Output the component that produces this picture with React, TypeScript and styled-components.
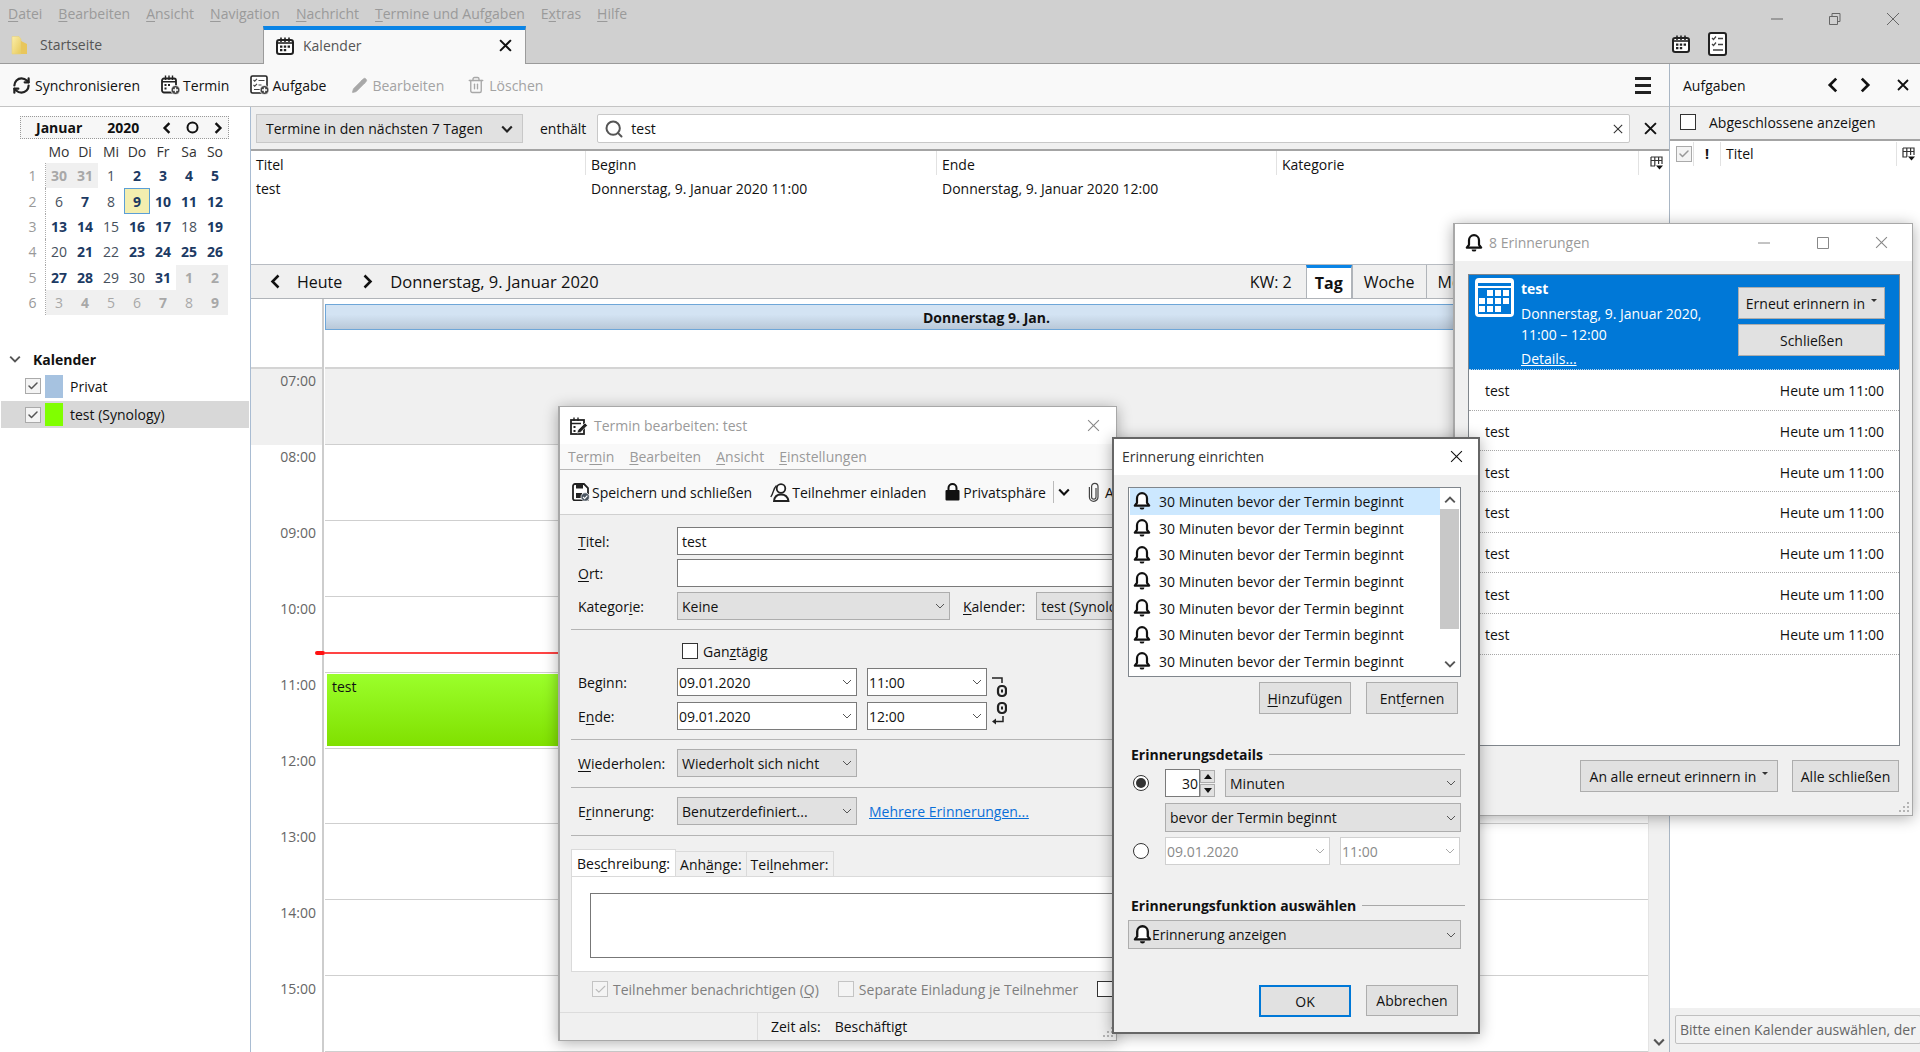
import React from "react";
import styled, { createGlobalStyle } from "styled-components";
import { RefreshCw, Pencil, Trash2, Search, Check } from "lucide-react";

const Global = createGlobalStyle`
  html, body { margin: 0; padding: 0; height: 100%; overflow: hidden; background: #fff; }
  body { font-family: "Open Sans", "Noto Sans", "Liberation Sans", sans-serif; font-size: 14px; color: #111; }
  #root { height: 100%; }
  * { box-sizing: border-box; }
`;

const Page = styled.div`
  position: relative; width: 1920px; height: 1052px; overflow: hidden;
  display: flex; flex-direction: column; background: #fff;
`;
const MenuBar = styled.div`
  height: 26px; background: #d0d0d0; display: flex; align-items: center; gap: 16px; padding-left: 8px; flex: none;
`;
const MenuItem = styled.span`
  color: #9a9a9a; white-space: nowrap;
`;
const Accel = styled.span`text-decoration: underline; text-underline-offset: 2px;`;
const WinControls = styled.div`
  margin-left: auto; display: flex; align-items: center; gap: 44px; padding-right: 20px; height: 26px; position: relative; top: 6px;
`;
const TabBar = styled.div`
  height: 38px; background: #d0d0d0; border-bottom: 1px solid #9b9b9b; display: flex; flex: none; align-items: stretch;
`;
const HomeTab = styled.div`
  width: 263px; display: flex; align-items: center; gap: 11px; padding-left: 11px; color: #555;
`;
const ActiveTab = styled.div`
  width: 263px; height: 38px; background: #f9f9f9; border-top: 4px solid #0a84e6; border-left: 1px solid #9b9b9b; border-right: 1px solid #9b9b9b;
  display: flex; align-items: center; padding: 0 13px 3px 12px; gap: 9px; color: #555; position: relative;
`;
const TabClose = styled.span`margin-left: auto; display: flex;`;
const ModeButtons = styled.div`
  margin-left: auto; display: flex; gap: 18px; align-items: center; padding-right: 193px; padding-bottom: 2px;
`;
const Body = styled.div`flex: 1; display: flex; min-height: 0;`;
const LeftArea = styled.div`width: 1669px; display: flex; flex-direction: column; flex: none;`;
const Toolbar = styled.div`
  height: 43px; flex: none; background: #f9f9f9; border-bottom: 1px solid #c4c4c4;
  display: flex; align-items: center; gap: 21px; padding-left: 12px; padding-right: 18px; 
`;
const ToolItem = styled.span`
  display: flex; align-items: center; gap: ${p => p.$gap ?? 4}px; margin-left: ${p => p.$ml || 0}px; white-space: nowrap; color: ${p => (p.$off ? "#a3a3a3" : "#111")};
`;
const ToolMenu = styled.span`margin-left: auto; display: flex; flex-direction: column; gap: 4px;`;
const MenuBarLine = styled.span`width: 16px; height: 3px; background: #222;`;
const Content = styled.div`flex: 1; display: flex; min-height: 0;`;
const Sidebar = styled.div`
  width: 251px; flex: none; border-right: 1px solid #a9bcd2; padding-top: 9px; background: #fff;
`;
const MiniCal = styled.div`margin-left: 20px; width: 209px;`;
const MiniHead = styled.div`
  height: 23px; border: 1px dotted #999; display: flex; align-items: center; font-weight: 700; padding-left: 15px; position: relative; background: #f7f7f7;
`;
const MiniYear = styled.span`margin-left: 25px;`;
const MiniArrows = styled.span`margin-left: 22px; display: flex; align-items: center; gap: 13px;`;
const MiniGrid = styled.div`
  display: grid; grid-template-columns: 26px repeat(7, 26px); grid-template-rows: 24px; grid-auto-rows: 25.4px;
`;
const Wd = styled.div`
  display: flex; align-items: center; justify-content: center; color: #333;
`;
const Wk = styled.div`
  display: flex; align-items: center; justify-content: center; color: #999; border-right: 1px dotted #aaa;
`;
const DayCell = styled.div`
  display: flex; align-items: center; justify-content: center;
  font-weight: ${p => (p.$bold ? 700 : 400)};
  color: ${p => (p.$other ? "#a8a8a8" : p.$bold ? "#1c3a63" : "#46505c")};
  background: ${p => (p.$today ? "#f3eeaf" : p.$other ? "#f0f0f0" : "transparent")};
  border: ${p => (p.$today ? "1px solid #5b9fd6" : "none")};
`;
const CalTitle = styled.div`
  margin-top: 34px; display: flex; align-items: center; height: 20px; padding-left: 9px; gap: 12px; font-weight: 700;
`;
const CalRow = styled.div`
  display: flex; align-items: center; height: ${p => (p.$sel ? 27 : 24)}px; margin: ${p => (p.$sel ? "3px 1px 0 1px" : "5px 1px 0 1px")};
  padding-left: 24px; background: ${p => (p.$sel ? "#d8d8d8" : "transparent")};
`;
const CheckBox = styled.span`
  width: 16px; height: 16px; border: 1px solid #aaa; background: #f4f4f4; display: inline-flex; align-items: center; justify-content: center; flex: none; color: #555;
`;
const Swatch = styled.span`
  width: 18px; height: 23px; background: ${p => p.$c}; margin-left: 4px; margin-right: 7px; flex: none;
`;
const Center = styled.div`flex: 1; display: flex; flex-direction: column; min-width: 0;`;
const FilterBar = styled.div`
  height: 44px; flex: none; background: #f0f0f0; border-bottom: 2px solid #a4a4a4; display: flex; align-items: center; padding: 1px 12px 0 5px;
`;
const FilterSelect = styled.div`
  width: 267px; height: 29px; background: #e1e1e1; border: 1px solid #c8c8c8; display: flex; align-items: center; padding: 0 9px; justify-content: space-between;
`;
const Contains = styled.span`margin: 0 11px 0 17px;`;
const SearchBox = styled.div`
  flex: 1; height: 29px; background: #fff; border: 1px solid #c8c8c8; border-radius: 2px; display: flex; align-items: center; padding: 0 6px; gap: 7px;
`;
const SearchClear = styled.span`margin-left: auto; display: flex;`;
const FilterClose = styled.span`margin-left: 14px; display: flex;`;
const TableWrap = styled.div`height: 114px; flex: none; background: #fff; border-bottom: 1px solid #b8bcc2;`;
const TableRow = styled.div`
  display: grid; grid-template-columns: 335px 351px 340px 362px 1fr; height: ${p => (p.$head ? 24 : 26)}px; align-items: center;
`;
const TableCell = styled.div`
  padding: ${p => (p.$head ? "2px" : "0")} 0 0 ${p => (p.$pick ? 11 : 5)}px; height: 24px; display: flex; align-items: center;
  border-right: ${p => (p.$head ? "1px solid #e2e2e2" : "none")}; white-space: nowrap;
`;
const NavBar = styled.div`
  height: 34px; flex: none; background: #f0f0f0; border-bottom: 1px solid #b0b4b9; display: flex; align-items: center; padding-left: 17px; position: relative;
`;
const NavLabel = styled.span`margin: 0 18px 0 14px; font-size: 16px;`;
const NavDate = styled.span`margin-left: 15px; font-size: 16.5px; white-space: nowrap;`;
const NavWeek = styled.span`margin-left: auto; margin-right: 14px; font-size: 16px;`;
const ViewTab = styled.span`
  height: 33px; display: flex; align-items: center; padding: 0 ${p => (p.$active ? 8 : 11)}px; font-size: 16px; white-space: nowrap;
  font-weight: ${p => (p.$active ? 700 : 400)}; background: ${p => (p.$active ? "#fff" : "transparent")};
  border-top: ${p => (p.$active ? "3px solid #0a84e6" : "none")};
  border-left: 1px solid #b0b4b9; border-right: ${p => (p.$active ? "1px solid #b0b4b9" : "none")};
  align-self: flex-end;
`;
const ViewTabs = styled.div`display: flex; align-self: stretch; padding-right: 172px;`;
const DayView = styled.div`flex: 1; display: flex; min-height: 0; overflow: hidden;`;
const Gutter = styled.div`width: 73px; flex: none; border-right: 2px solid #cdcdcd; margin-right: 1px;`;
const GutterTop = styled.div`height: 68px;`;
const HourLabel = styled.div`
  height: ${p => (p.$first ? 78 : 76)}px; background: ${p => (p.$first ? "#f0f0f0" : "#fff")}; text-align: right; padding: 1px 6px 0 0; color: #666;
  line-height: 22px; border-top: ${p => (p.$first ? "2px solid #d4d4d4" : "none")};
`;
const DayCol = styled.div`flex: 1; min-width: 0; display: flex; flex-direction: column;`;
const DayHead = styled.div`
  margin-top: 5px; height: 26px; border: 1px solid #6ea6d8; background: linear-gradient(#d3e3f3 40%, #b9c8d8); font-weight: 700; display: flex; align-items: center; justify-content: center;
  flex: none;
`;
const AllDay = styled.div`height: 37px; flex: none; background: #fff;`;
const Slots = styled.div`position: relative; border-top: 2px solid #d4d4d4;`;
const Slot = styled.div`
  height: ${p => (p.$first ? 76 : 75.9)}px; background: ${p => (p.$first ? "#f0f0f0" : "#fff")}; border-bottom: 1px solid #cfcfcf;
`;
const NowLine = styled.div`
  position: absolute; left: 0; right: 0; top: 283px; height: 2px; background: #f44;
  &::before { content: ""; position: absolute; left: -10px; top: -1px; width: 10px; height: 4px; border-radius: 2px; background: #f11; }
`;
const EventBox = styled.div`
  position: absolute; left: 2px; right: 1px; top: 305px; height: 72px; background: linear-gradient(#9bff2b, #80e000); padding: 3px 5px; color: #111;
`;
const VScroll = styled.div`
  width: 21px; flex: none; background: #f0f0f0; border-left: 1px solid #e4e4e4; display: flex; align-items: flex-end; justify-content: center; padding-bottom: 4px;
`;
const RightPanel = styled.div`
  flex: 1; display: flex; flex-direction: column; border-left: 1px solid #a9b6c4; background: #fff;
`;
const RightHead = styled.div`
  height: 43px; flex: none; background: #f9f9f9; border-bottom: 1px solid #c4c4c4; display: flex; align-items: center; padding-left: 13px;
`;
const RightNav = styled.span`margin-left: auto; display: flex; align-items: center; gap: 16px; padding-right: 11px;`;
const RightClose = styled.span`margin: 0 5px 0 8px; display: flex;`;
const RightFilter = styled.div`
  height: 34px; flex: none; background: #f0f0f0; border-bottom: 2px solid #a4a4a4; display: flex; align-items: center; padding-left: 10px; gap: 13px; padding-bottom: 2px;
`;
const PlainBox = styled.span`
  width: 16px; height: 16px; flex: none; display: inline-flex; align-items: center; justify-content: center;
  background: ${p => (p.$off ? "#f4f4f4" : "#fff")}; border: 1px solid ${p => (p.$off ? "#c4c4c4" : "#333")}; color: #bbb;
`;
const TaskHead = styled.div`display: flex; height: 25px; align-items: center; padding: 0 4px;`;
const TaskCell = styled.div`
  height: 24px; display: flex; align-items: center; justify-content: ${p => (p.$grow ? "flex-start" : "center")}; flex: ${p => (p.$grow ? 1 : "none")};
  width: ${p => (p.$w ? p.$w + "px" : "auto")}; border-right: ${p => (p.$noline ? "none" : "1px solid #e2e2e2")}; padding-left: ${p => (p.$grow ? 5 : 0)}px;
`;
const Spacer = styled.div`flex: 1;`;
const QuickAdd = styled.div`height: 44px; flex: none; background: #f0f0f0; padding: 7px 4px 8px 5px;`;
const QuickInput = styled.div`
  height: 29px; border: 1px solid #c0c0c0; border-radius: 2px; background: #f2f2f2; color: #666; padding: 0 4px; display: flex; align-items: center; overflow: hidden; white-space: nowrap;
`;

/* windows */
const Win = styled.div`
  position: absolute; left: ${p => p.$x}px; top: ${p => p.$y}px; width: ${p => p.$w}px; height: ${p => p.$h}px; background: #f0f0f0;
  border: ${p => (p.$active ? "2px solid #666" : "1px solid #a8a8a8")}; border-left-width: 2px;
  box-shadow: 0 2px 14px rgba(0,0,0,.32); display: flex; flex-direction: column; overflow: hidden; z-index: ${p => p.$z};
`;
const WinTitle = styled.div`
  height: ${p => p.$h || 37}px; background: #fff; flex: none; display: flex; align-items: center; gap: 6px;
  padding: 0 ${p => p.$pr || 16}px ${p => (p.$active ? 2 : 0)}px ${p => (p.$active ? 8 : 10)}px;
  color: ${p => (p.$active ? "#333" : "#9a9a9a")};
`;
const TitleBtns = styled.span`margin-left: auto; display: flex; align-items: center; gap: 45px;`;
const DlgMenu = styled.div`
  height: 26px; flex: none; background: #f9f9f9; border-bottom: 1px solid #b8b8b8; display: flex; align-items: center; gap: 15px; padding-left: 8px; color: #9a9a9a;
`;
const DlgTools = styled.div`
  height: 45px; flex: none; background: #f9f9f9; border-bottom: 1px solid #d0d0d0; display: flex; align-items: center; padding-left: 12px; white-space: nowrap;
`;
const DlgTool = styled.span`display: flex; flex: none; align-items: center; gap: 2px; margin-right: ${p => p.$mr ?? 18}px;`;
const DlgSep = styled.span`width: 1px; height: 22px; flex: none; background: #bbb; margin: 0 4px 0 -11px;`;
const Form = styled.div`flex: 1; display: flex; flex-direction: column; padding: 0 0 0 11px; min-height: 0;`;
const FRow = styled.div`
  display: flex; align-items: center; height: ${p => p.$h}px; margin-top: ${p => p.$mt}px; flex: none;
`;
const FLabel = styled.span`width: 106px; padding-left: 7px; flex: none; white-space: nowrap;`;
const Hr = styled.div`height: 1px; background: #b4b4b4; margin-top: ${p => p.$mt}px; flex: none;`;
const TextBox = styled.div`
  flex: 1; height: 100%; background: #fff; border: 1px solid #7a7a7a; display: flex; align-items: center; padding: 0 4px; white-space: nowrap;
`;
const Combo = styled.div`
  flex: ${p => (p.$w ? "none" : 1)}; width: ${p => (p.$w ? p.$w + "px" : "auto")}; height: 100%; padding: 0 4px 0 ${p => (p.$kind ? 1 : 4)}px; display: flex; align-items: center; justify-content: space-between; white-space: nowrap; overflow: hidden;
  background: ${p => (p.$kind === "edit" ? "#fff" : p.$kind === "off" ? "#fff" : "#e1e1e1")};
  border: 1px solid ${p => (p.$kind === "edit" ? "#7a7a7a" : p.$kind === "off" ? "#d0d0d0" : "#adadad")};
  color: ${p => (p.$kind === "off" ? "#8a8a8a" : "#111")};
  margin-left: ${p => p.$ml || 0}px;
`;
const ChainSlot = styled.span`position: relative; width: 0; height: 100%; flex: none;`;
const ChainIcon = styled.span`position: absolute; left: 4px; top: 9px; display: flex;`;
const Side = styled.span`margin-left: ${p => p.$ml}px; white-space: nowrap; display: flex; align-items: center;`;
const LinkText = styled.span`margin-left: 12px; color: #0a6fd8; text-decoration: underline; white-space: nowrap;`;
const TabsRow = styled.div`display: flex; align-items: flex-end; height: 27px; margin-top: 13px; flex: none;`;
const DTab = styled.span`
  height: ${p => (p.$active ? 27 : 25)}px; padding: 0 ${p => (p.$active ? 5 : 4)}px; display: flex; align-items: center; white-space: nowrap;
  background: ${p => (p.$active ? "#fff" : "#f0f0f0")}; border: 1px solid #dadada; border-bottom: none;
  margin-right: -1px;
`;
const DPanel = styled.div`
  height: 96px; flex: none; background: #fff; border: 1px solid #dadada; padding: 16px 0 14px 18px;
`;
const TextArea = styled.div`height: 65px; border: 1px solid #777; background: #fff;`;
const ChecksRow = styled.div`display: flex; align-items: center; margin-top: 9px; padding-left: 21px; height: 16px; flex: none; color: #7e7e7e;`;
const CheckLabel = styled.span`margin: 0 19px 0 5px; white-space: nowrap;`;
const StatusBar = styled.div`
  margin: auto 0 0 -11px; height: 28px; border-top: 1px solid #dcdcdc; display: flex; align-items: center; flex: none; position: relative;
`;
const StatusField = styled.span`
  margin-left: 197px; padding-left: 13px; border-left: 1px solid #dcdcdc; height: 100%; display: flex; align-items: center; gap: 14px; white-space: nowrap;
`;
const Grip = styled.span`
  position: absolute; right: 2px; bottom: 2px; display: flex;
`;

const RemWinBody = styled.div`flex: 1; display: flex; flex-direction: column; padding: 13px 12px 0 13px; min-height: 0; position: relative;`;
const RemList = styled.div`height: 472px; flex: none; background: #fff; border: 1px solid #80868c; padding: 0;`;
const RemSel = styled.div`
  height: 95px; background: #0078d7; color: #fff; display: flex; padding: 3px 14px 0 6px; border-bottom: 1px dotted #b9d3e8;
`;
const RemText = styled.div`margin-left: 7px; flex: 1; line-height: 21px;`;
const RemName = styled.div`font-weight: 700;`;
const RemLine = styled.div`margin-top: ${p => p.$mt || 0}px; white-space: nowrap;`;
const RemLink = styled.div`text-decoration: underline; margin-top: 3px;`;
const RemBtns = styled.div`display: flex; flex-direction: column; gap: 5px; margin-top: 9px;`;
const PushBtn = styled.div`
  width: ${p => p.$w}px; height: ${p => p.$h || 32}px; background: #e1e1e1; border: ${p => (p.$def ? "2px solid #0078d7" : "1px solid #adadad")};
  display: flex; align-items: center; justify-content: center; gap: 6px; color: #111; white-space: nowrap; flex: none;
`;
const RemRow = styled.div`
  height: 40.7px; display: flex; align-items: center; justify-content: space-between; padding: 2px 15px 0 16px; border-bottom: 1px dotted #a8a8a8;
`;
const RemFoot = styled.div`display: flex; justify-content: flex-end; gap: 14px; margin-top: 14px; padding-right: 1px;`;
const Caret = styled.span`
  display: inline-block; width: 0; height: 0; border-left: 3px solid transparent; border-right: 3px solid transparent; border-top: 3px solid #333; margin-bottom: 5px;
`;

const DlgBody = styled.div`flex: 1; display: flex; flex-direction: column; padding: 12px 0 0 14px; min-height: 0;`;
const DlgList = styled.div`
  width: 333px; height: 190px; flex: none; background: #fff; border: 1px solid #80868c; display: flex; overflow: hidden;
`;
const DlgRows = styled.div`flex: 1; padding: 0 0 0 1px;`;
const DlgRow = styled.div`
  height: 26.7px; display: flex; align-items: center; gap: 8px; padding-left: 3px; white-space: nowrap;
  background: ${p => (p.$sel ? "#cce8ff" : "transparent")};
`;
const DlgScroll = styled.div`width: 20px; flex: none; display: flex; flex-direction: column; align-items: center; justify-content: space-between; padding: 6px 0 6px; position: relative;`;
const DlgThumb = styled.div`position: absolute; left: 0; right: 1px; top: 21px; height: 120px; background: #c8c8c8;`;
const DlgBtnRow = styled.div`display: flex; gap: 15px; margin: ${p => p.$mt}px 0 0 ${p => p.$ml}px; flex: none;`;
const Group = styled.div`display: flex; align-items: center; gap: 6px; font-weight: 700; height: 20px; padding-bottom: 1px; margin-top: ${p => p.$mt}px; margin-left: 3px; margin-right: 13px; flex: none; white-space: nowrap;`;
const GroupLine = styled.span`flex: 1; height: 1px; background: #a8a8a8;`;
const DRow = styled.div`display: flex; align-items: center; height: ${p => p.$h}px; margin-top: ${p => p.$mt}px; flex: none; width: 333px;`;
const Radio = styled.span`
  width: 16px; height: 16px; border-radius: 50%; border: 1px solid #333; background: #fff; display: inline-flex; align-items: center; justify-content: center; flex: none; margin: 0 16px 0 5px;
  &::after { content: ""; width: ${p => (p.$on ? 10 : 0)}px; height: ${p => (p.$on ? 10 : 0)}px; background: #333; border-radius: 50%; }
`;
const NumBox = styled.div`
  width: 35px; height: 100%; border: 1px solid #7a7a7a; background: #fff; display: flex; align-items: center; justify-content: flex-end; padding-right: 1px; flex: none;
`;
const Spin = styled.div`
  width: 15px; height: 27px; margin: 0 10px 0 0; display: flex; flex-direction: column; gap: 1px; flex: none;
`;
const SpinBtn = styled.span`flex: 1; background: #e1e1e1; border: 1px solid #adadad; display: flex; align-items: center; justify-content: center;`;
const Arrow = styled.span`
  width: 0; height: 0; border-left: 4px solid transparent; border-right: 4px solid transparent;
  ${p => (p.$up ? "border-bottom: 5px solid #111;" : "border-top: 5px solid #111;")}
`;

/* icons */
const S = ({ w = 18, h = 18, children, vb }: any) => (
  <svg width={w} height={h} viewBox={vb || `0 0 ${w} ${h}`} fill="none">{children}</svg>
);
const Chev = ({ dir = "down", size = 10, color = "#555", sw = 1 }: any) => {
  const d = dir === "down" ? "M1 3l4 4 4-4" : dir === "up" ? "M1 7l4-4 4 4" : dir === "left" ? "M7 1L3 5l4 4" : "M3 1l4 4-4 4";
  return <S w={size} h={size} vb="0 0 10 10"><path d={d} stroke={color} strokeWidth={sw} /></S>;
};
const XIcon = ({ size = 12, color = "#111", sw = 1.6 }: any) => (
  <S w={size} h={size} vb="0 0 12 12"><path d="M1 1l10 10M11 1L1 11" stroke={color} strokeWidth={sw} /></S>
);
const CalIcon = ({ size = 18 }: any) => (
  <S w={size} h={size} vb="0 0 18 18">
    <rect x="1" y="3" width="16" height="14" rx="2.2" stroke="#222" strokeWidth="2" fill="#fff" />
    <path d="M5 0.5V5M9 0.5V5M13 0.5V5" stroke="#222" strokeWidth="1.6" />
    <path d="M1 6h16" stroke="#222" strokeWidth="1.6" />
    <path d="M4 8.5h2.4v2.2H4zM7.8 8.5h2.4v2.2H7.8zM11.6 8.5H14v2.2h-2.4zM4 12h2.4v2.2H4zM7.8 12h2.4v2.2H7.8z" fill="#222" />
  </S>
);
const TaskListIcon = () => (
  <S w={19} h={24} vb="0 0 19 24">
    <rect x="1" y="1" width="17" height="22" rx="2" stroke="#222" strokeWidth="2" fill="#fff" />
    <path d="M4 6l1.5 1.5L8 4.5M4 12l1.5 1.5L8 10.5" stroke="#444" strokeWidth="1.2" />
    <path d="M10 6.5h5M10 12.5h5M5 18h10" stroke="#444" strokeWidth="1.4" />
  </S>
);
const PlusBadge = () => (
  <>
    <circle cx="14.5" cy="15" r="4.5" fill="#444" stroke="#fff" strokeWidth="0.8" />
    <path d="M14.5 12.5v5M12 15h5" stroke="#fff" strokeWidth="1.3" />
  </>
);
const NewEventIcon = () => (
  <S w={20} h={20} vb="0 0 20 20">
    <rect x="1" y="3.5" width="14" height="14" rx="2" stroke="#222" strokeWidth="1.8" fill="#fff" />
    <path d="M4.5 0.5V5M8 0.5V5M11.5 0.5V5M1 6.8h14" stroke="#222" strokeWidth="1.4" />
    <path d="M3.5 9h2v2h-2zM7 9h2v2H7zM3.5 12.5h2v2h-2z" fill="#222" />
    <PlusBadge />
  </S>
);
const NewTaskIcon = () => (
  <S w={20} h={20} vb="0 0 20 20">
    <rect x="1" y="1" width="16" height="17" rx="1.5" stroke="#222" strokeWidth="1.6" fill="#fff" />
    <path d="M3.5 5l1.2 1.2L7 3.8M3.5 10l1.2 1.2L7 8.8" stroke="#444" strokeWidth="1.1" />
    <path d="M8.5 5.5h6M8.5 10h3M4 14.5h6" stroke="#444" strokeWidth="1.2" />
    <PlusBadge />
  </S>
);
const Folder = () => (
  <S w={18} h={20} vb="0 0 18 20">
    <defs><linearGradient id="fg" x1="0" y1="0" x2="1" y2="1"><stop offset="0" stopColor="#fbeeaa" /><stop offset="1" stopColor="#e7c95a" /></linearGradient></defs>
    <path d="M1 1.5h7l2 2.5v15H1z" fill="url(#fg)" stroke="#e6d27e" strokeWidth=".6" />
    <path d="M10 6l6 3v10h-6z" fill="#e8c65c" />
  </S>
);
const Bell = ({ size = 18 }: any) => (
  <S w={size} h={size} vb="0 0 18 18">
    <path d="M9 1.2a5 5 0 0 0-5 5v4.6L1.8 13.6h14.4L14 10.8V6.2a5 5 0 0 0-5-5z" stroke="#111" strokeWidth="2.2" strokeLinejoin="round" fill="#fff" />
    <path d="M6.6 15.4h4.8a2.4 2.2 0 0 1-4.8 0z" fill="#111" />
  </S>
);
const Grid3 = () => (
  <S w={14} h={14} vb="0 0 14 14">
    <path d="M1 1h11v7M1 1v9h4M1 4.5h11M4.8 1v9M8.6 1v7" stroke="#333" strokeWidth="1.2" />
    <path d="M6 9.5h7l-3.5 4z" fill="#111" />
  </S>
);
const WinGrip = () => (
  <S w={12} h={12} vb="0 0 12 12">
    <path d="M9 1h2v2H9zM5 5h2v2H5zM9 5h2v2H9zM1 9h2v2H1zM5 9h2v2H5zM9 9h2v2H9z" fill="#b4b4b4" />
  </S>
);
const Chain = () => (
  <S w={16} h={50} vb="0 0 16 50">
    <path d="M1 1h10v5" stroke="#222" strokeWidth="1.5" />
    <rect x="7" y="9" width="8" height="10" rx="3.5" stroke="#222" strokeWidth="2.2" />
    <path d="M11 12.5v3" stroke="#222" strokeWidth="2" />
    <rect x="7" y="26" width="8" height="10" rx="3.5" stroke="#222" strokeWidth="2.2" />
    <path d="M11 29.5v3" stroke="#222" strokeWidth="2" />
    <path d="M12 39v5.5H3" stroke="#222" strokeWidth="1.5" />
    <path d="M5 41.5L1 44.5L5 47.5z" fill="#222" />
  </S>
);
const EditIcon = () => (
  <S w={18} h={18} vb="0 0 18 18">
    <rect x="1" y="3" width="13" height="14" stroke="#222" strokeWidth="1.8" fill="#fff" />
    <path d="M4 0.5V4M8 0.5V4M1 6.5h10" stroke="#222" strokeWidth="1.4" />
    <path d="M3.5 9h2v2h-2zM3.5 13h2v2h-2z" fill="#222" />
    <path d="M7 16l1-3 7-7 2.4 2.4-7 7z" fill="#222" stroke="#fff" strokeWidth=".6" />
  </S>
);
const SaveIcon = () => (
  <S w={18} h={18} vb="0 0 18 18">
    <path d="M1 3a2 2 0 0 1 2-2h9l4 4v11a1.5 1.5 0 0 1-1.5 1.5H3a2 2 0 0 1-2-2z" stroke="#222" strokeWidth="1.8" fill="#fff" />
    <rect x="4" y="1" width="7" height="4.5" fill="#222" />
    <rect x="4" y="10" width="6" height="5" fill="#222" />
    <circle cx="13.2" cy="14" r="4.2" fill="#4a5560" stroke="#fff" strokeWidth=".7" />
    <path d="M11 14l1.6 1.6 2.8-3" stroke="#fff" strokeWidth="1.1" />
  </S>
);
const PeopleIcon = () => (
  <S w={20} h={20} vb="0 0 20 20">
    <circle cx="11" cy="6.5" r="4.3" stroke="#222" strokeWidth="1.8" fill="#fff" />
    <path d="M4 19c.5-4.5 3-6.5 7-6.5s6.7 2 7.5 6.5z" stroke="#222" strokeWidth="1.8" fill="#fff" />
    <path d="M6.5 3.5C3 7 4 10 .8 15" stroke="#222" strokeWidth="1.3" />
  </S>
);
const LockIcon = () => (
  <S w={17} h={18} vb="0 0 17 18">
    <rect x="1.5" y="7" width="14" height="10.5" rx="1" fill="#111" />
    <path d="M4.5 7.5V5a4 4 0 0 1 8 0v2.5" stroke="#111" strokeWidth="2" />
  </S>
);
const Clip = () => (
  <S w={18} h={20} vb="0 0 18 20">
    <path d="M11 6v9a2.2 2.2 0 0 1-4.4 0V4.5a3.2 3.2 0 0 1 6.4 0V15a4.3 4.3 0 0 1-8.6 0V5" stroke="#444" strokeWidth="1.2" />
  </S>
);
const BigCal = () => (
  <S w={39} h={39} vb="0 0 39 39">
    <rect width="39" height="39" rx="4" fill="#fff" />
    <rect x="3" y="5" width="33" height="3" fill="#0078d7" />
    <rect x="3" y="10" width="33" height="26" fill="#0078d7" />
    <path d="M12 12h6v6h-6zM20 12h6v6h-6zM28 12h6v6h-6zM4 20h6v6H4zM12 20h6v6h-6zM20 20h6v6h-6zM28 20h6v6h-6zM4 28h6v6H4zM12 28h6v6h-6zM20 28h6v6h-6z" fill="#fff" />
  </S>
);

const week: [number, string][][] = [
  [[30, "ob"], [31, "ob"], [1, ""], [2, "b"], [3, "b"], [4, "b"], [5, "b"]],
  [[6, ""], [7, "b"], [8, ""], [9, "tb"], [10, "b"], [11, "b"], [12, "b"]],
  [[13, "b"], [14, "b"], [15, ""], [16, "b"], [17, "b"], [18, ""], [19, "b"]],
  [[20, ""], [21, "b"], [22, ""], [23, "b"], [24, "b"], [25, "b"], [26, "b"]],
  [[27, "b"], [28, "b"], [29, ""], [30, ""], [31, "b"], [1, "ob"], [2, "ob"]],
  [[3, "o"], [4, "ob"], [5, "o"], [6, "o"], [7, "ob"], [8, "o"], [9, "ob"]],
];
const menus: [string, string, string][] = [
  ["", "D", "atei"], ["", "B", "earbeiten"], ["", "A", "nsicht"], ["", "N", "avigation"], ["", "N", "achricht"], ["", "T", "ermine und Aufgaben"], ["E", "x", "tras"], ["", "H", "ilfe"],
];
const hours = ["07:00", "08:00", "09:00", "10:00", "11:00", "12:00", "13:00", "14:00", "15:00"];
const Ul = ({ a = "", k, b = "" }: any) => <>{a}<Accel>{k}</Accel>{b}</>;

export default function App() {
  return (
    <Page>
      <Global />
      <MenuBar>
        {menus.map(([a, k, b]) => <MenuItem key={a + k + b}><Ul a={a} k={k} b={b} /></MenuItem>)}
        <WinControls>
          <S w={14} h={14} vb="0 0 14 14"><path d="M1 7h12" stroke="#666" /></S>
          <S w={14} h={14} vb="0 0 14 14"><path d="M1.5 4.5h8v8h-8zM4 4.5V1.5h8v8h-2.5" stroke="#666" /></S>
          <S w={14} h={14} vb="0 0 14 14"><path d="M1 1l12 12M13 1L1 13" stroke="#666" /></S>
        </WinControls>
      </MenuBar>
      <TabBar>
        <HomeTab><Folder />Startseite</HomeTab>
        <ActiveTab><CalIcon />Kalender<TabClose><XIcon size={13} color="#111" sw={1.8} /></TabClose></ActiveTab>
        <ModeButtons><CalIcon /><TaskListIcon /></ModeButtons>
      </TabBar>
      <Body>
        <LeftArea>
          <Toolbar>
            <ToolItem><RefreshCw size={19} strokeWidth={2.8} color="#222" />Synchronisieren</ToolItem>
            <ToolItem $gap={2}><NewEventIcon />Termin</ToolItem>
            <ToolItem $gap={2}><NewTaskIcon />Aufgabe</ToolItem>
            <ToolItem $off $ml={4}><Pencil size={17} color="#a8a8a8" fill="#a8a8a8" strokeWidth={1} />Bearbeiten</ToolItem>
            <ToolItem $off $ml={2}><Trash2 size={18} color="#a8a8a8" strokeWidth={1.8} />Löschen</ToolItem>
            <ToolMenu><MenuBarLine /><MenuBarLine /><MenuBarLine /></ToolMenu>
          </Toolbar>
          <Content>
            <Sidebar>
              <MiniCal>
                <MiniHead>
                  Januar<MiniYear>2020</MiniYear>
                  <MiniArrows>
                    <Chev dir="left" size={12} color="#111" sw={2} />
                    <S w={13} h={13} vb="0 0 13 13"><circle cx="6.5" cy="6.5" r="5" stroke="#111" strokeWidth="2" /></S>
                    <Chev dir="right" size={12} color="#111" sw={2} />
                  </MiniArrows>
                </MiniHead>
                <MiniGrid>
                  <Wd />
                  {["Mo", "Di", "Mi", "Do", "Fr", "Sa", "So"].map(d => <Wd key={d}>{d}</Wd>)}
                  {week.map((r, i) => (
                    <React.Fragment key={i}>
                      <Wk>{i + 1}</Wk>
                      {r.map(([d, f], j) => (
                        <DayCell key={j} $bold={f.includes("b")} $other={f.includes("o")} $today={f.includes("t")}>{d}</DayCell>
                      ))}
                    </React.Fragment>
                  ))}
                </MiniGrid>
              </MiniCal>
              <CalTitle><Chev size={12} color="#555" sw={1.6} />Kalender</CalTitle>
              <CalRow><CheckBox><Check size={12} strokeWidth={3} /></CheckBox><Swatch $c="#a6c2e0" />Privat</CalRow>
              <CalRow $sel><CheckBox><Check size={12} strokeWidth={3} /></CheckBox><Swatch $c="#80ff00" />test (Synology)</CalRow>
            </Sidebar>
            <Center>
              <FilterBar>
                <FilterSelect>Termine in den nächsten 7 Tagen<Chev color="#222" size={12} sw={1.8} /></FilterSelect>
                <Contains>enthält</Contains>
                <SearchBox>
                  <Search size={20} strokeWidth={2.4} color="#555" />test
                  <SearchClear><XIcon size={10} color="#333" sw={1.3} /></SearchClear>
                </SearchBox>
                <FilterClose><XIcon size={13} color="#111" sw={1.8} /></FilterClose>
              </FilterBar>
              <TableWrap>
                <TableRow $head>
                  <TableCell $head>Titel</TableCell>
                  <TableCell $head>Beginn</TableCell>
                  <TableCell $head>Ende</TableCell>
                  <TableCell $head>Kategorie</TableCell>
                  <TableCell $pick><Grid3 /></TableCell>
                </TableRow>
                <TableRow>
                  <TableCell>test</TableCell>
                  <TableCell>Donnerstag, 9. Januar 2020 11:00</TableCell>
                  <TableCell>Donnerstag, 9. Januar 2020 12:00</TableCell>
                  <TableCell />
                </TableRow>
              </TableWrap>
              <NavBar>
                <Chev dir="left" size={15} color="#111" sw={1.7} />
                <NavLabel>Heute</NavLabel>
                <Chev dir="right" size={15} color="#111" sw={1.7} />
                <NavDate>Donnerstag, 9. Januar 2020</NavDate>
                <NavWeek>KW: 2</NavWeek>
                <ViewTabs>
                  <ViewTab $active>Tag</ViewTab>
                  <ViewTab>Woche</ViewTab>
                  <ViewTab>Monat</ViewTab>
                </ViewTabs>
              </NavBar>
              <DayView>
                <Gutter>
                  <GutterTop />
                  {hours.map((h, i) => <HourLabel key={h} $first={i === 0}>{h}</HourLabel>)}
                </Gutter>
                <DayCol>
                  <DayHead>Donnerstag 9. Jan.</DayHead>
                  <AllDay />
                  <Slots>
                    {hours.map((h, i) => <Slot key={h} $first={i === 0} />)}
                    <NowLine />
                    <EventBox>test</EventBox>
                  </Slots>
                </DayCol>
                <VScroll><Chev size={12} color="#555" sw={1.8} /></VScroll>
              </DayView>
            </Center>
          </Content>
        </LeftArea>
        <RightPanel>
          <RightHead>
            Aufgaben
            <RightNav>
              <Chev dir="left" size={16} color="#111" sw={1.7} />
              <Chev dir="right" size={16} color="#111" sw={1.7} />
              <RightClose><XIcon size={12} color="#111" sw={1.8} /></RightClose>
            </RightNav>
          </RightHead>
          <RightFilter><PlainBox />Abgeschlossene anzeigen</RightFilter>
          <TaskHead>
            <TaskCell $w={20}><CheckBox><Check size={12} strokeWidth={3} color="#999" /></CheckBox></TaskCell>
            <TaskCell $w={27}><b>!</b></TaskCell>
            <TaskCell $grow>Titel</TaskCell>
            <TaskCell $w={24} $noline><Grid3 /></TaskCell>
          </TaskHead>
          <Spacer />
          <QuickAdd><QuickInput>Bitte einen Kalender auswählen, der</QuickInput></QuickAdd>
        </RightPanel>
      </Body>

      {/* Termin bearbeiten */}
      <Win $x={558} $y={406} $w={559} $h={635} $z={2}>
        <WinTitle><EditIcon />Termin bearbeiten: test<TitleBtns><XIcon size={13} color="#888" sw={1} /></TitleBtns></WinTitle>
        <DlgMenu>
          <span><Ul a="Ter" k="m" b="in" /></span><span><Ul k="B" b="earbeiten" /></span><span><Ul k="A" b="nsicht" /></span><span><Ul k="E" b="instellungen" /></span>
        </DlgMenu>
        <DlgTools>
          <DlgTool><SaveIcon />Speichern und schließen</DlgTool>
          <DlgTool><PeopleIcon />Teilnehmer einladen</DlgTool>
          <DlgTool><LockIcon />Privatsphäre</DlgTool>
          <DlgSep />
          <DlgTool $mr={15}><Chev size={12} color="#111" sw={1.8} /></DlgTool>
          <DlgTool $mr={2}><Clip />A</DlgTool>
        </DlgTools>
        <Form>
          <FRow $h={28} $mt={12}><FLabel><Ul k="T" b="itel:" /></FLabel><TextBox>test</TextBox></FRow>
          <FRow $h={28} $mt={4}><FLabel><Ul k="O" b="rt:" /></FLabel><TextBox /></FRow>
          <FRow $h={28} $mt={5}>
            <FLabel>Kategor<Accel>i</Accel>e:</FLabel>
            <Combo $w={273}>Keine<Chev /></Combo>
            <Side $ml={13}><span><Ul k="K" b="alender:" /></span></Side>
            <Combo $ml={11}>test (Synology)<Chev /></Combo>
          </FRow>
          <Hr $mt={9} />
          <FRow $h={16} $mt={13}>
            <FLabel /><Side $ml={5}><PlainBox /></Side><Side $ml={5}><span>Gan<Accel>z</Accel>tägig</span></Side>
          </FRow>
          <FRow $h={28} $mt={9}>
            <FLabel>Be<Accel>g</Accel>inn:</FLabel>
            <Combo $w={180} $kind="edit">09.01.2020<Chev /></Combo>
            <Combo $w={120} $ml={10} $kind="edit">11:00<Chev /></Combo>
            <ChainSlot><ChainIcon><Chain /></ChainIcon></ChainSlot>
          </FRow>
          <FRow $h={28} $mt={6}>
            <FLabel>E<Accel>n</Accel>de:</FLabel>
            <Combo $w={180} $kind="edit">09.01.2020<Chev /></Combo>
            <Combo $w={120} $ml={10} $kind="edit">12:00<Chev /></Combo>
          </FRow>
          <Hr $mt={9} />
          <FRow $h={28} $mt={9}>
            <FLabel><Ul k="W" b="iederholen:" /></FLabel>
            <Combo $w={180}>Wiederholt sich nicht<Chev /></Combo>
          </FRow>
          <Hr $mt={10} />
          <FRow $h={28} $mt={9}>
            <FLabel>E<Accel>r</Accel>innerung:</FLabel>
            <Combo $w={180}>Benutzerdefiniert...<Chev /></Combo>
            <LinkText>Mehrere Erinnerungen...</LinkText>
          </FRow>
          <Hr $mt={10} />
          <TabsRow>
            <DTab $active>Bes<Accel>c</Accel>hreibung:</DTab>
            <DTab>Anh<Accel>ä</Accel>nge:</DTab>
            <DTab>Tei<Accel>l</Accel>nehmer:</DTab>
          </TabsRow>
          <DPanel><TextArea /></DPanel>
          <ChecksRow>
            <PlainBox $off><Check size={13} strokeWidth={2} /></PlainBox><CheckLabel>Teilnehmer benachrichtigen (<Accel>Q</Accel>)</CheckLabel>
            <PlainBox $off /><CheckLabel>Separate Einladung <Accel>j</Accel>e Teilnehmer</CheckLabel>
            <PlainBox />
          </ChecksRow>
          <StatusBar>
            <StatusField>Zeit als:<span>Beschäftigt</span></StatusField>
            <Grip><WinGrip /></Grip>
          </StatusBar>
        </Form>
      </Win>

      {/* 8 Erinnerungen */}
      <Win $x={1453} $y={223} $w={460} $h={593} $z={3}>
        <WinTitle $h={37} $pr={24}>
          <Bell />8 Erinnerungen
          <TitleBtns>
            <S w={14} h={14} vb="0 0 14 14"><path d="M1 7h12" stroke="#888" /></S>
            <S w={14} h={14} vb="0 0 14 14"><path d="M1.5 1.5h11v11h-11z" stroke="#888" /></S>
            <XIcon size={13} color="#888" sw={1} />
          </TitleBtns>
        </WinTitle>
        <RemWinBody>
          <RemList>
            <RemSel>
              <BigCal />
              <RemText>
                <RemName>test</RemName>
                <RemLine $mt={4}>Donnerstag, 9. Januar 2020,</RemLine>
                <RemLine>11:00 – 12:00</RemLine>
                <RemLink>Details...</RemLink>
              </RemText>
              <RemBtns>
                <PushBtn $w={147}>Erneut erinnern in <Caret /></PushBtn>
                <PushBtn $w={147}>Schließen</PushBtn>
              </RemBtns>
            </RemSel>
            {Array.from({ length: 7 }).map((_, i) => (
              <RemRow key={i}><span>test</span><span>Heute um 11:00</span></RemRow>
            ))}
          </RemList>
          <RemFoot>
            <PushBtn $w={198}>An alle erneut erinnern in <Caret /></PushBtn>
            <PushBtn $w={107}>Alle schließen</PushBtn>
          </RemFoot>
          <Grip><WinGrip /></Grip>
        </RemWinBody>
      </Win>

      {/* Erinnerung einrichten */}
      <Win $x={1112} $y={437} $w={368} $h={597} $z={4} $active>
        <WinTitle $h={36} $active $pr={15}>Erinnerung einrichten<TitleBtns><XIcon size={13} color="#111" sw={1} /></TitleBtns></WinTitle>
        <DlgBody>
          <DlgList>
            <DlgRows>
              {Array.from({ length: 7 }).map((_, i) => (
                <DlgRow key={i} $sel={i === 0}><Bell />30 Minuten bevor der Termin beginnt</DlgRow>
              ))}
            </DlgRows>
            <DlgScroll>
              <Chev dir="up" size={12} color="#555" sw={1.6} />
              <DlgThumb />
              <Chev size={12} color="#555" sw={1.6} />
            </DlgScroll>
          </DlgList>
          <DlgBtnRow $mt={5} $ml={131}>
            <PushBtn $w={92}><span><Ul k="H" b="inzufügen" /></span></PushBtn>
            <PushBtn $w={92}><span>Ent<Accel>f</Accel>ernen</span></PushBtn>
          </DlgBtnRow>
          <Group $mt={31}>Erinnerungsdetails<GroupLine /></Group>
          <DRow $h={28} $mt={4}>
            <Radio $on />
            <NumBox>30</NumBox>
            <Spin><SpinBtn><Arrow $up /></SpinBtn><SpinBtn><Arrow /></SpinBtn></Spin>
            <Combo>Minuten<Chev /></Combo>
          </DRow>
          <DRow $h={29} $mt={6}>
            <Side $ml={37} />
            <Combo>bevor der Termin beginnt<Chev /></Combo>
          </DRow>
          <DRow $h={28} $mt={5}>
            <Radio />
            <Combo $w={165} $kind="off">09.01.2020<Chev color="#aaa" /></Combo>
            <Combo $w={120} $ml={10} $kind="off">11:00<Chev color="#aaa" /></Combo>
          </DRow>
          <Group $mt={31}>Erinnerungsfunktion auswählen<GroupLine /></Group>
          <DRow $h={29} $mt={4}>
            <Combo><Bell size={19} /><Side $ml={0}>Erinnerung anzeigen</Side><Spacer /><Chev /></Combo>
          </DRow>
          <DlgBtnRow $mt={36} $ml={131}>
            <PushBtn $w={92} $def>OK</PushBtn>
            <PushBtn $w={92} $h={31}>Abbrechen</PushBtn>
          </DlgBtnRow>
        </DlgBody>
      </Win>
    </Page>
  );
}
